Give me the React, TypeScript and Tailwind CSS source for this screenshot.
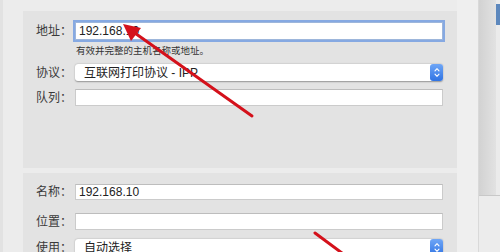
import React from "react";

const FONT = "font-['Liberation_Sans','Noto_Sans_CJK_SC',sans-serif]";

function Stepper() {
  return (
    <span className="flex h-full w-[13px] shrink-0 items-center justify-center rounded-[3px] bg-gradient-to-b from-[#6fa6f6] to-[#2f73e3]">
      <svg viewBox="0 0 10 16" className="h-[13px] w-[8px]" fill="none" stroke="white" strokeWidth={1.4} strokeLinecap="round" strokeLinejoin="round">
        <path d="M2.5 6 L5 3.3 L7.5 6" />
        <path d="M2.5 10 L5 12.7 L7.5 10" />
      </svg>
    </span>
  );
}

function Label({ children }: { children: React.ReactNode }) {
  return <span className="w-[49px] shrink-0 text-right text-[12px] leading-none text-[#3a3a3a]">{children}</span>;
}

function Field({ value, focus, h = "h-[17px]" }: { value?: string; focus?: boolean; h?: string }) {
  return (
    <div
      className={
        focus
          ? `ml-[3px] flex ${h} w-[368px] shrink-0 items-center border border-[#9db6db] bg-white pl-[3px] text-[12px] text-[#222] shadow-[0_0_0_2px_#86a9e2]`
          : `ml-[3px] flex ${h} w-[368px] shrink-0 items-center border border-[#cbcbcb] border-t-[#bdbdbd] bg-white pl-[3px] text-[12px] text-[#222]`
      }
    >
      {value}
    </div>
  );
}

function Popup({ value }: { value: string }) {
  return (
    <div className="ml-[3px] flex h-[17px] w-[368px] shrink-0 items-center justify-between rounded-[3px] bg-white pl-[9px] text-[12px] text-[#222] shadow-[0_0.5px_1.5px_rgba(0,0,0,0.35)]">
      <span>{value}</span>
      <Stepper />
    </div>
  );
}

export default function App() {
  return (
    <div className={`relative flex h-[252px] w-[500px] overflow-hidden bg-[#ececec] ${FONT}`}>
      <div className="w-[3px] shrink-0 bg-[#e2e2e2]" />

      <div className="flex w-[454px] shrink-0 flex-col pl-[20px] pt-[11px]">
        {/* printer address panel */}
        <div className="flex h-[157px] w-[434px] shrink-0 flex-col bg-[#e3e3e3]">
          <div className="mt-[11px] flex shrink-0 items-center">
            <Label>地址：</Label>
            <Field value="192.168.10" focus h="h-[18px]" />
          </div>
          <p className="ml-[53px] mt-[5px] h-[12px] shrink-0 text-[9.5px] leading-[12px] text-[#333]">有效并完整的主机名称或地址。</p>
          <div className="mt-[7px] flex shrink-0 items-center">
            <Label>协议：</Label>
            <Popup value="互联网打印协议 - IPP" />
          </div>
          <div className="mt-[8px] flex shrink-0 items-center">
            <Label>队列：</Label>
            <Field />
          </div>
        </div>

        {/* name / location panel */}
        <div className="mt-[5px] flex w-[434px] flex-1 shrink-0 flex-col bg-[#e3e3e3]">
          <div className="mt-[11px] flex shrink-0 items-center">
            <Label>名称：</Label>
            <Field value="192.168.10" h="h-[16px]" />
          </div>
          <div className="mt-[13px] flex shrink-0 items-center">
            <Label>位置：</Label>
            <Field />
          </div>
          <div className="mt-[9px] flex shrink-0 items-center">
            <Label>使用：</Label>
            <Popup value="自动选择" />
          </div>
        </div>
      </div>

      <div className="w-[21px] shrink-0 bg-[#efefef]" />
      <div className="w-px shrink-0 bg-[#d9d9d9]" />

      {/* window behind */}
      <div className="flex w-[21px] shrink-0 flex-col">
        <div className="flex h-[196px] shrink-0 border-b border-[#c8c8c8]">
          <div className="w-[17px] bg-gradient-to-r from-[#d2d2d2] to-[#e2e2e2]" />
          <div className="flex w-[4px] flex-col bg-[#ebebeb]">
            <div className="mt-[4px] h-[21px] bg-[#5d88bd]" />
          </div>
        </div>
        <div className="flex-1 bg-[#ececec]" />
      </div>

      {/* red annotation arrows */}
      <svg viewBox="0 0 500 252" className="pointer-events-none absolute inset-0 h-[252px] w-[500px]">
        <line x1={252} y1={116} x2={132} y2={31} stroke="#d4111b" strokeWidth={3} strokeLinecap="round" />
        <polygon points="123,24 141,28 131,41" fill="#d4111b" />
        <line x1={315} y1={233} x2={346} y2={256} stroke="#d4111b" strokeWidth={3} strokeLinecap="round" />
      </svg>
    </div>
  );
}
